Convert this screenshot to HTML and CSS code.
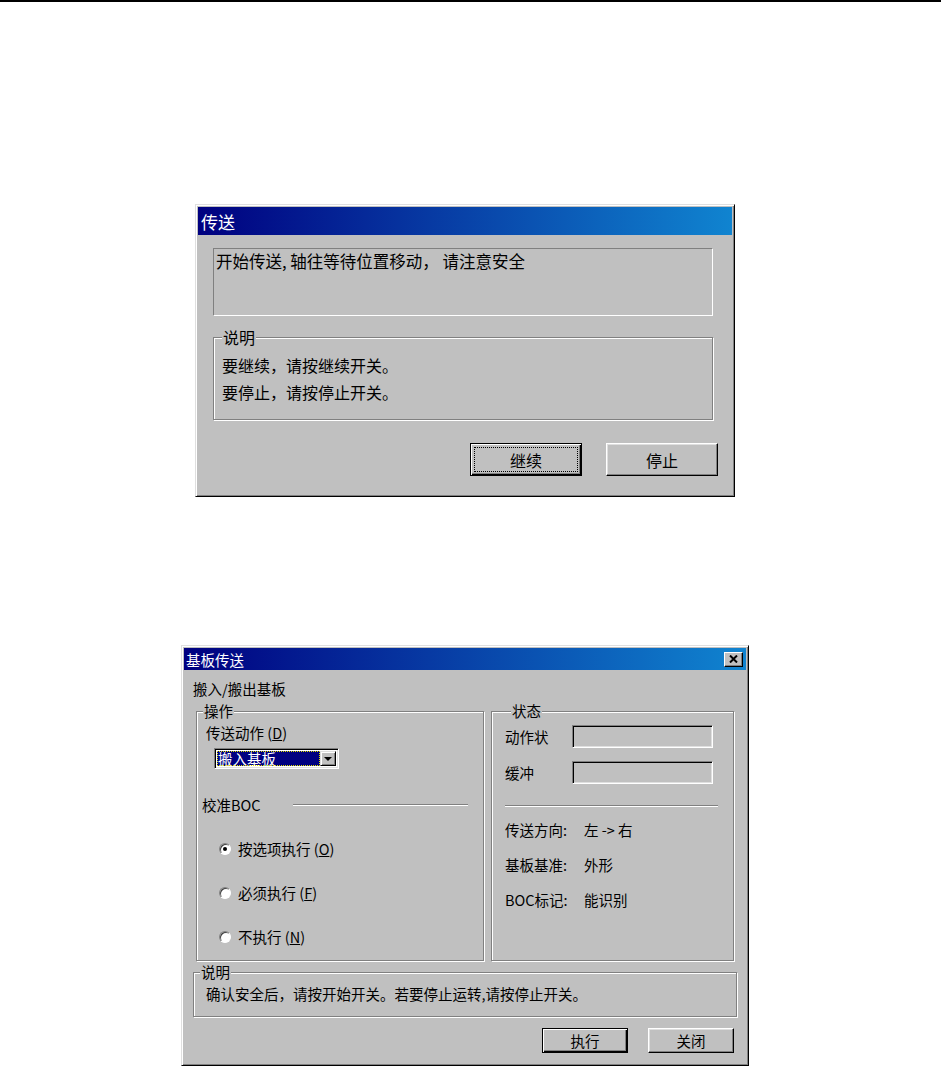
FILE: index.html
```html
<!DOCTYPE html>
<html>
<head>
  <title>传送 / 基板传送</title>
  <link rel="stylesheet" href="styles.css">
</head>
<body>
  <div class="rule"></div>

  <div class="page">
    <!-- dialog 1 -->
    <div class="win win-msg">
      <div class="titlebar titlebar-lg"><span>传送</span></div>
      <div class="msg-body">
        <div class="msg-box">开始传送, 轴往等待位置移动， 请注意安全</div>
        <fieldset class="group group-lg">
          <legend>说明</legend>
          <p>要继续，请按继续开关。</p>
          <p>要停止，请按停止开关。</p>
        </fieldset>
        <div class="btn-row btn-row-lg">
          <button class="btn btn-lg btn-default btn-focus">继续</button>
          <button class="btn btn-lg">停止</button>
        </div>
      </div>
    </div>

    <!-- dialog 2 -->
    <div class="win win-board">
      <div class="titlebar titlebar-sm">
        <span>基板传送</span>
        <span class="close-btn">
          <svg width="9" height="8" viewBox="0 0 9 8"><path d="M1 0.5 L8 7.5 M8 0.5 L1 7.5" stroke="#000" stroke-width="2"/></svg>
        </span>
      </div>
      <div class="board-body">
        <div class="caption">搬入/搬出基板</div>

        <div class="group-row">
          <fieldset class="group group-sm op-group">
            <legend>操作</legend>
            <div class="op-label">传送动作 (<u>D</u>)</div>
            <div class="combo">
              <span class="combo-value">搬入基板</span>
              <span class="combo-arrow"></span>
            </div>
            <div class="sep-row">
              <span>校准BOC</span>
              <span class="etch"></span>
            </div>
            <div class="radios">
              <div class="radio-row"><span class="radio checked"></span><span>按选项执行 (<u>O</u>)</span></div>
              <div class="radio-row"><span class="radio"></span><span>必须执行 (<u>F</u>)</span></div>
              <div class="radio-row"><span class="radio"></span><span>不执行 (<u>N</u>)</span></div>
            </div>
          </fieldset>

          <fieldset class="group group-sm state-group">
            <legend>状态</legend>
            <div class="state-row state-first">
              <span class="state-label">动作状</span>
              <span class="field"></span>
            </div>
            <div class="state-row state-second">
              <span class="state-label">缓冲</span>
              <span class="field"></span>
            </div>
            <div class="etch state-etch"></div>
            <div class="info-list">
              <div class="info-row"><span class="info-label">传送方向:</span><span>左 -&gt; 右</span></div>
              <div class="info-row"><span class="info-label">基板基准:</span><span>外形</span></div>
              <div class="info-row"><span class="info-label">BOC标记:</span><span>能识别</span></div>
            </div>
          </fieldset>
        </div>

        <fieldset class="group group-sm note-group">
          <legend>说明</legend>
          <p>确认安全后，请按开始开关。若要停止运转,请按停止开关。</p>
        </fieldset>

        <div class="btn-row btn-row-sm">
          <button class="btn btn-sm btn-default">执行</button>
          <button class="btn btn-sm">关闭</button>
        </div>
      </div>
    </div>
  </div>
</body>
</html>
```

FILE: styles.css
```css
body {
  margin: 0;
  background: #fff;
  font-family: "Noto Sans CJK SC", "Liberation Sans", sans-serif;
  color: #000;
}

.rule {
  height: 2px;
  background: #000;
}

/* window frame */
.win {
  box-sizing: border-box;
  display: flex;
  flex-direction: column;
  background: #c0c0c0;
  border: 1px solid;
  border-color: #dfdfdf #000 #000 #dfdfdf;
  box-shadow: inset 1px 1px #fff, inset -1px -1px #808080;
  padding: 2px;
}

.win-msg {
  width: 540px;
  height: 293px;
  margin: 202px 0 0 195px;
}

.win-board {
  width: 568px;
  height: 421px;
  margin: 148px 0 0 181px;
}

.titlebar {
  display: flex;
  align-items: center;
  justify-content: space-between;
  background: linear-gradient(to right, #000080, #1084d0);
  color: #fff;
}

.titlebar-lg {
  height: 28px;
  font-size: 17px;
  padding-left: 3px;
}

.titlebar-sm {
  height: 22px;
  font-size: 14.5px;
  padding: 0 3px 0 2px;
}

.close-btn {
  box-sizing: border-box;
  width: 19px;
  height: 15px;
  display: flex;
  align-items: center;
  justify-content: center;
  background: #c0c0c0;
  border: 1px solid;
  border-color: #fff #000 #000 #fff;
  box-shadow: inset -1px -1px #808080;
}

/* etched group box */
.group {
  box-sizing: border-box;
  margin: 0;
  padding: 0;
  min-width: 0;
  border: 1px solid #808080;
  box-shadow: inset 1px 1px #fff, 1px 1px #fff;
}

.group legend {
  padding: 0 1px;
  margin-left: 6px;
  background: #c0c0c0;
}

.group p {
  margin: 0;
}

/* dialog 1 */
.msg-body {
  display: flex;
  flex-direction: column;
  align-items: flex-start;
  padding: 13px 14px 0 15px;
}

.msg-box {
  box-sizing: border-box;
  width: 500px;
  height: 68px;
  border: 1px solid;
  border-color: #808080 #fff #fff #808080;
  font-size: 16.5px;
  line-height: 20px;
  padding: 2px 0 0 2px;
}

.group-lg {
  width: 500px;
  margin-top: 11px;
  padding: 5px 0 13px 8px;
  font-size: 16px;
}

.group-lg legend {
  line-height: 20px;
  margin-left: 0;
}

.group-lg p {
  line-height: 27px;
}

.btn-row {
  align-self: stretch;
  display: flex;
  justify-content: flex-end;
}

.btn-row-lg {
  margin-top: 23px;
  gap: 24px;
}

.btn {
  box-sizing: border-box;
  padding: 0;
  font-family: inherit;
  color: #000;
  background: #c0c0c0;
  border: 1px solid;
  border-color: #fff #000 #000 #fff;
  box-shadow: inset -1px -1px #808080, inset 1px 1px #dfdfdf;
}

.btn-default {
  border-color: #000;
  box-shadow: inset 1px 1px #fff, inset -1px -1px #000, inset -2px -2px #808080;
}

.btn-focus {
  outline: 1px dotted #000;
  outline-offset: -5px;
}

.btn-lg {
  width: 112px;
  height: 33px;
  font-size: 16px;
}

/* dialog 2 */
.board-body {
  display: flex;
  flex-direction: column;
  padding: 11px 9px 0 9px;
  font-size: 14.5px;
}

.caption {
  line-height: 16px;
}

.group-row {
  display: flex;
  gap: 7px;
  margin: 6px 3px 0;
}

.group-sm legend {
  line-height: 16px;
}

.op-group {
  width: 288px;
  height: 258px;
  line-height: 16px;
}

.op-label {
  margin: 6px 0 0 9px;
}

.combo {
  box-sizing: border-box;
  display: flex;
  width: 125px;
  height: 21px;
  margin: 7px 0 0 17px;
  padding: 2px;
  border: 1px solid;
  border-color: #808080 #fff #fff #808080;
  box-shadow: inset 1px 1px #000, inset -1px -1px #dfdfdf;
  background: #fff;
}

.combo-value {
  flex: 1;
  background: #000080;
  color: #fff;
  line-height: 15px;
  padding-left: 1px;
  outline: 1px dotted #e0e000;
  outline-offset: -1px;
}

.combo-arrow {
  box-sizing: border-box;
  width: 16px;
  display: flex;
  align-items: center;
  justify-content: center;
  background: #c0c0c0;
  border: 1px solid;
  border-color: #dfdfdf #000 #000 #dfdfdf;
  box-shadow: inset 1px 1px #fff, inset -1px -1px #808080;
}

.combo-arrow::after {
  content: "";
  border-left: 4px solid transparent;
  border-right: 4px solid transparent;
  border-top: 4px solid #000;
}

.etch {
  height: 0;
  border-top: 1px solid #808080;
  border-bottom: 1px solid #fff;
}

.sep-row {
  display: flex;
  align-items: center;
  margin: 28px 15px 0 5px;
}

.sep-row .etch {
  flex: 1;
  margin-left: 32px;
}

.radios {
  display: flex;
  flex-direction: column;
  gap: 28px;
  margin: 28px 0 0 22px;
}

.radio-row {
  display: flex;
  align-items: center;
  gap: 7px;
}

.radio {
  box-sizing: border-box;
  width: 12px;
  height: 12px;
  border-radius: 50%;
  background: #fff;
  border: 1px solid;
  border-color: #808080 #fff #fff #808080;
  box-shadow: inset 1px 1px #404040;
  display: flex;
  align-items: center;
  justify-content: center;
}

.radio.checked::after {
  content: "";
  width: 4px;
  height: 4px;
  border-radius: 50%;
  background: #000;
}

.state-group {
  flex: 1;
  line-height: 16px;
  padding: 0 15px 0 13px;
}

.state-row {
  display: flex;
  align-items: center;
}

.state-first {
  margin-top: 6px;
}

.state-second {
  margin-top: 13px;
}

.state-label {
  width: 67px;
}

.field {
  box-sizing: border-box;
  width: 141px;
  height: 23px;
  border: 1px solid;
  border-color: #808080 #fff #fff #808080;
  box-shadow: inset 1px 1px #000, inset -1px -1px #dfdfdf;
}

.state-etch {
  margin-top: 21px;
}

.info-list {
  display: flex;
  flex-direction: column;
  gap: 19px;
  margin-top: 15px;
}

.info-label {
  display: inline-block;
  width: 79px;
}

.note-group {
  height: 53px;
  margin-top: 3px;
  line-height: 16px;
}

.note-group p {
  margin: 6px 0 0 12px;
}

.btn-row-sm {
  margin-top: 11px;
  gap: 20px;
  padding-right: 3px;
}

.btn-sm {
  width: 86px;
  height: 25px;
  font-size: 14.5px;
}
```
